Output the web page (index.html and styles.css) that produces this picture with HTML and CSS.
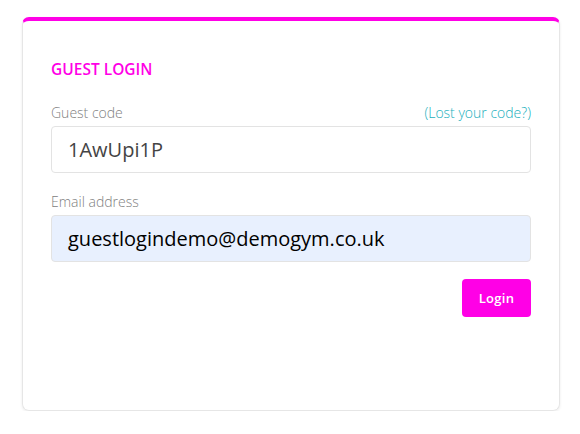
FILE: index.html
```html
<!DOCTYPE html>
<html>
<head>
<meta charset="utf-8">
<link rel="stylesheet" href="styles.css">
</head>
<body>
<div class="card">
  <h2 class="title">GUEST LOGIN</h2>
  <div class="field">
    <div class="label-row">
      <label class="label">Guest code</label>
      <a class="lost">(Lost your code?)</a>
    </div>
    <div class="input">1AwUpi1P</div>
  </div>
  <div class="field">
    <div class="label-row">
      <label class="label">Email address</label>
    </div>
    <div class="input autofill">guestlogindemo@demogym.co.uk</div>
  </div>
  <div class="actions">
    <button class="btn">Login</button>
  </div>
</div>
</body>
</html>
```
FILE: styles.css
```css
html, body { margin: 0; background: #fff; }
body {
  padding: 17px 20px 0 22px;
  font-family: "Open Sans", sans-serif;
}
.card {
  width: 538px;
  height: 394px;
  box-sizing: border-box;
  border: 1px solid #e6e6e6;
  border-top: 4px solid #ff00e6;
  border-radius: 7px;
  box-shadow: 0 1px 3px rgba(0,0,0,0.08);
  padding: 37px 28px 0 28px;
}
.title {
  margin: 0 0 24px;
  font-size: 15.5px;
  line-height: 22px;
  font-weight: 600;
  color: #ff00e6;
}
.field { margin-bottom: 20px; }
.label-row {
  display: flex;
  justify-content: space-between;
  align-items: baseline;
  margin-bottom: 4px;
}
.label {
  font-size: 14px;
  line-height: 18px;
  font-weight: 300;
  color: #808080;
}
.lost {
  font-size: 14px;
  line-height: 18px;
  font-weight: 300;
  color: #1aafbd;
}
.input {
  height: 47px;
  box-sizing: border-box;
  border: 1px solid #e3e3e3;
  border-radius: 4px;
  padding: 0 16px;
  display: flex;
  align-items: center;
  font-size: 20px;
  color: #444;
}
.input.autofill {
  background: #e8f0fe;
  color: #000;
}
.actions {
  display: flex;
  justify-content: flex-end;
  margin-top: -3px;
}
.btn {
  width: 69px;
  height: 38px;
  border: 0;
  border-radius: 4px;
  background: #ff00e6;
  color: #fff;
  font-family: "Open Sans", sans-serif;
  font-size: 13px;
  font-weight: 600;
  letter-spacing: 0.3px;
}
```
